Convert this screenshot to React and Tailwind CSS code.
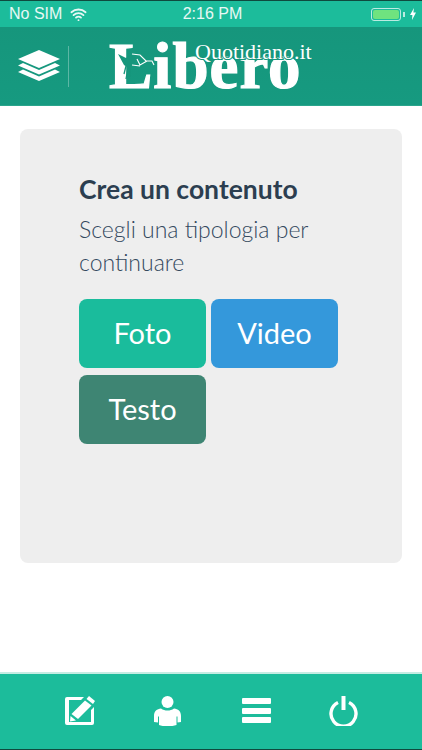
import { Wifi } from 'lucide-react';

const buttons = [
  { label: 'Foto', color: 'bg-[#1abc9c]' },
  { label: 'Video', color: 'bg-[#3498db]' },
  { label: 'Testo', color: 'bg-[#3e8573]' },
];

function StatusBar() {
  return (
    <div className="h-[27px] bg-[#1cbc9b] border-t border-[#0f4a3e] flex items-center justify-between pl-[9px] pr-[6px] text-white/90 text-[16px] font-['Liberation_Sans',sans-serif]">
      <div className="w-[130px] flex items-center gap-[8px]">
        <span>No SIM</span>
        <Wifi size={17} strokeWidth={2.6} />
      </div>
      <span>2:16 PM</span>
      <div className="w-[130px] flex items-center justify-end gap-[2px]">
        <div className="w-[30px] h-[13px] rounded-[3px] border border-white/70 p-[1px]">
          <div className="w-full h-full rounded-[2px] bg-[#6fe37f]" />
        </div>
        <div className="w-[2px] h-[5px] bg-white/70 mr-[3px]" />
        <svg width="6" height="12" viewBox="0 0 6 12" fill="white"><path d="M4 0 0 7h2.4L2 12l4-7.5H3.4z" /></svg>
      </div>
    </div>
  );
}

function LayersIcon() {
  return (
    <svg width="42" height="32" viewBox="0 0 42 32" fill="white">
      <path d="M21 0 42 9 21 18 0 9z" />
      <path d="M5 13 21 20 37 13 42 15.5 21 24.5 0 15.5z" />
      <path d="M5 19.5 21 26.5 37 19.5 42 22 21 31 0 22z" />
    </svg>
  );
}

function Pegasus() {
  return (
    <svg className="absolute left-[7px] top-[7px]" width="40" height="34" viewBox="0 0 40 34" fill="none">
      <path d="M2 6 10 10 14 7 21 10 14 21 8 17z" fill="#16967c" />
      <path d="M12 20 10 31M14 20 14 29M10 18 8 26" stroke="#16967c" strokeWidth="1.300" />
      <path d="M16 6 24 7 30 13 36 13 38 17M21 11 24 17 31 13M16 17 24 18" stroke="white" strokeWidth="1.100" />
    </svg>
  );
}

function Logo() {
  return (
    <div className="relative w-[206px] h-[50px] font-['Liberation_Serif',serif] text-white">
      <span className="absolute left-0 top-[-11px] text-[65px] leading-[72px] font-bold tracking-[1px] [-webkit-text-stroke:1.2px_white]">Libero</span>
      <Pegasus />
      <span className="absolute left-[86px] top-[-1px] text-[22px] leading-[24px] [paint-order:stroke] [-webkit-text-stroke:2px_#16967c]">Quotidiano.it</span>
    </div>
  );
}

function Header() {
  return (
    <header className="h-[79px] bg-gradient-to-b from-[#16967c] to-[#169a80] border-b border-[#2aa58c] flex items-center pl-[18px]">
      <LayersIcon />
      <div className="w-px h-[41px] bg-white/30 ml-[8px] mr-[40px]" />
      <Logo />
    </header>
  );
}

function EditIcon() {
  return (
    <svg width="30" height="30" viewBox="0 0 30 30" fill="white">
      <path d="M2 1h17l-3 3H4v22h22V14l3-3v16a2 2 0 0 1-2 2H2a2 2 0 0 1-2-2V3a2 2 0 0 1 2-2z" />
      <path d="M24 0 30 5 28 8 21.500 3z" />
      <path d="M20 4.500 26.500 9.500 13 23 6.500 18z" />
      <path d="M5.500 20 11 24.500 5 25.500z" />
    </svg>
  );
}

function UserIcon() {
  return (
    <svg width="27" height="30" viewBox="0 0 27 30" fill="white">
      <circle cx="13.500" cy="6" r="6" />
      <path d="M0 20c0-5 3-7 7-7.500 2 1.500 4 2 6.500 2s4.500-.5 6.500-2c4 .5 7 2.500 7 7.500v6l-3.500.5V20.500h-1V29c-2.500 1-5.500 1-9 1s-6.500 0-8.500-1V20.500h-1V26.500L0 26z" />
    </svg>
  );
}

function MenuIcon() {
  return (
    <div className="w-[29px] flex flex-col gap-[3.500px]">
      <div className="h-[6px] bg-white rounded-[1px]" />
      <div className="h-[6px] bg-white rounded-[1px]" />
      <div className="h-[6px] bg-white rounded-[1px]" />
    </div>
  );
}

function PowerIcon() {
  return (
    <svg width="29" height="30" viewBox="0 0 29 30" fill="none" stroke="white" strokeWidth="3.400">
      <path d="M9 6.500a12.500 12.500 0 1 0 11 0" />
      <path d="M14.500 0v14" strokeWidth="4" />
    </svg>
  );
}

export default function App() {
  return (
    <div className="w-[422px] h-[750px] flex flex-col bg-white overflow-hidden font-['Lato',sans-serif]">
      <StatusBar />
      <Header />
      <main className="flex-1 px-[20px] pt-[23px]">
        <div className="h-[434px] bg-[#eeeeee] rounded-[8px] pl-[59px] pt-[44px]">
          <h1 className="text-[26.500px] leading-[32px] font-bold text-[#2c3e50]">Crea un contenuto</h1>
          <p className="mt-[8px] w-[250px] text-[23px] leading-[33px] font-light text-[#34495e]">Scegli una tipologia per continuare</p>
          <div className="mt-[20px] w-[265px] flex flex-wrap gap-x-[5px] gap-y-[7px]">
            {buttons.map((b) => (
              <button key={b.label} className={`w-[127px] h-[69px] pb-[2px] rounded-[8px] text-white text-[29px] ${b.color}`}>
                {b.label}
              </button>
            ))}
          </div>
        </div>
      </main>
      <footer className="h-[78px] bg-[#1cbc9b] border-t-2 border-[#c5ece3] border-b border-b-[#0f4a3e] flex items-center pl-[65px] pb-[2px]">
        <div className="w-[89px]"><EditIcon /></div>
        <div className="w-[88px]"><UserIcon /></div>
        <div className="w-[87px]"><MenuIcon /></div>
        <PowerIcon />
      </footer>
    </div>
  );
}
